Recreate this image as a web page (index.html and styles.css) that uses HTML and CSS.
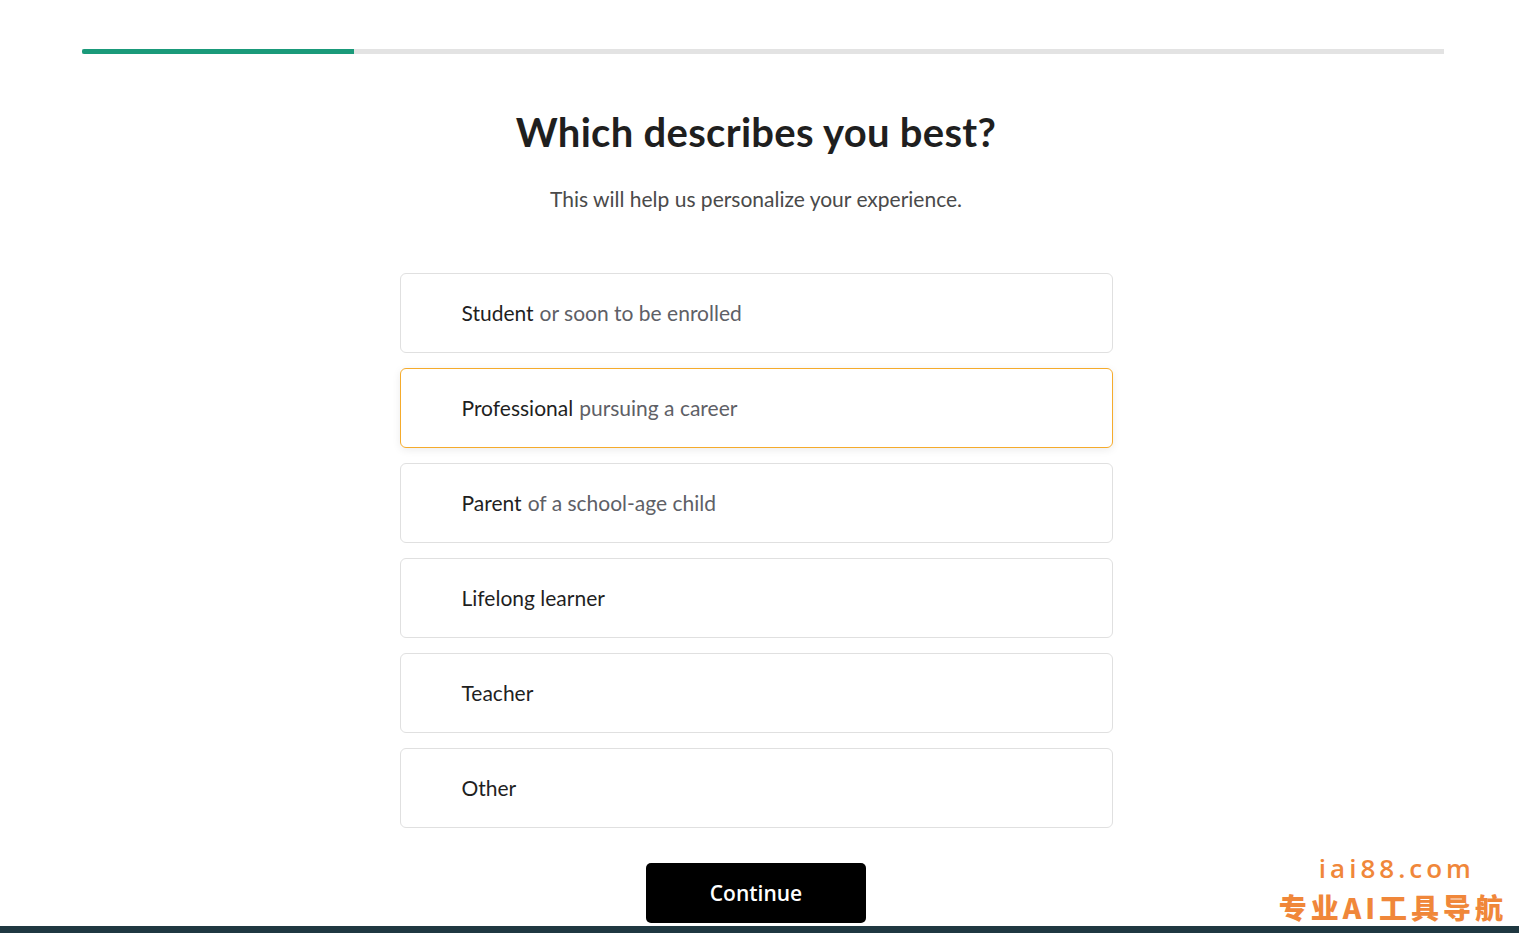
FILE: index.html
```html
<!DOCTYPE html>
<html lang="en">
<head>
  <meta charset="UTF-8">
  <title>Which describes you best?</title>
  <link rel="stylesheet" href="styles.css">
</head>
<body>
  <div class="progress"><div class="progress-fill"></div></div>

  <main class="survey">
    <h1>Which describes you best?</h1>
    <p class="sub">This will help us personalize your experience.</p>

    <ul class="options">
      <li class="option"><b>Student</b> or soon to be enrolled</li>
      <li class="option selected"><b>Professional</b> pursuing a career</li>
      <li class="option"><b>Parent</b> of a school-age child</li>
      <li class="option"><b>Lifelong learner</b></li>
      <li class="option"><b>Teacher</b></li>
      <li class="option"><b>Other</b></li>
    </ul>

    <button class="continue">Continue</button>
  </main>

  <div class="watermark">
    <div class="wm-url">iai88.com</div>
    <div class="wm-cn">专业AI工具导航</div>
  </div>
  <div class="footer-bar"></div>
</body>
</html>
```

FILE: styles.css
```css
html, body {margin:0; height:100%;}
body {font-family: Lato, "Open Sans", sans-serif; background:#fff; color:#1f1f1f; overflow:hidden;}

.progress {margin:49px 75px 0 82px; height:5px; background:#e3e3e3;}
.progress-fill {width:272px; height:100%; background:#1a9a7a; border-radius:2px 0 0 2px;}

.survey {display:flex; flex-direction:column; align-items:center; padding-right:7px;}
.survey h1 {margin:54px 0 0; font-size:40px; line-height:48px; font-weight:700; color:#1f1f1f; letter-spacing:0.3px;}
.sub {margin:30px 0 0; font-size:21px; line-height:26px; color:#4a4a4a;}

.options {list-style:none; padding:0; margin:61px 0 0; width:713px; display:flex; flex-direction:column; gap:15px;}
.option {box-sizing:border-box; height:80px; border:1px solid #e0e0e0; border-radius:6px; padding-left:61px; padding-bottom:2px; display:flex; align-items:center; gap:6px; font-size:21px; color:#5e6066;}
.option b {font-weight:400; color:#1f1f1f;}
.option.selected {border-color:#f5ab2c; box-shadow:0 2px 8px rgba(0,0,0,0.08);}

.continue {margin-top:35px; width:220px; height:60px; border:none; border-radius:5px; background:#000; color:#fff; font-family:"Open Sans", sans-serif; font-size:21px; font-weight:600; cursor:pointer;}

.watermark {position:absolute; right:12px; bottom:5px; display:flex; flex-direction:column; align-items:center; gap:1px; color:#f0873a; font-weight:700;}
.wm-url {font-family:"Open Sans", sans-serif; font-size:26px; line-height:34px; letter-spacing:4px; font-weight:600; margin-left:8px;}
.wm-cn {font-family:"Noto Sans CJK SC", sans-serif; font-size:28px; line-height:42px; letter-spacing:4px; font-weight:900;}

.footer-bar {position:absolute; left:0; right:0; bottom:0; height:7px; background:#1f3841;}
```
